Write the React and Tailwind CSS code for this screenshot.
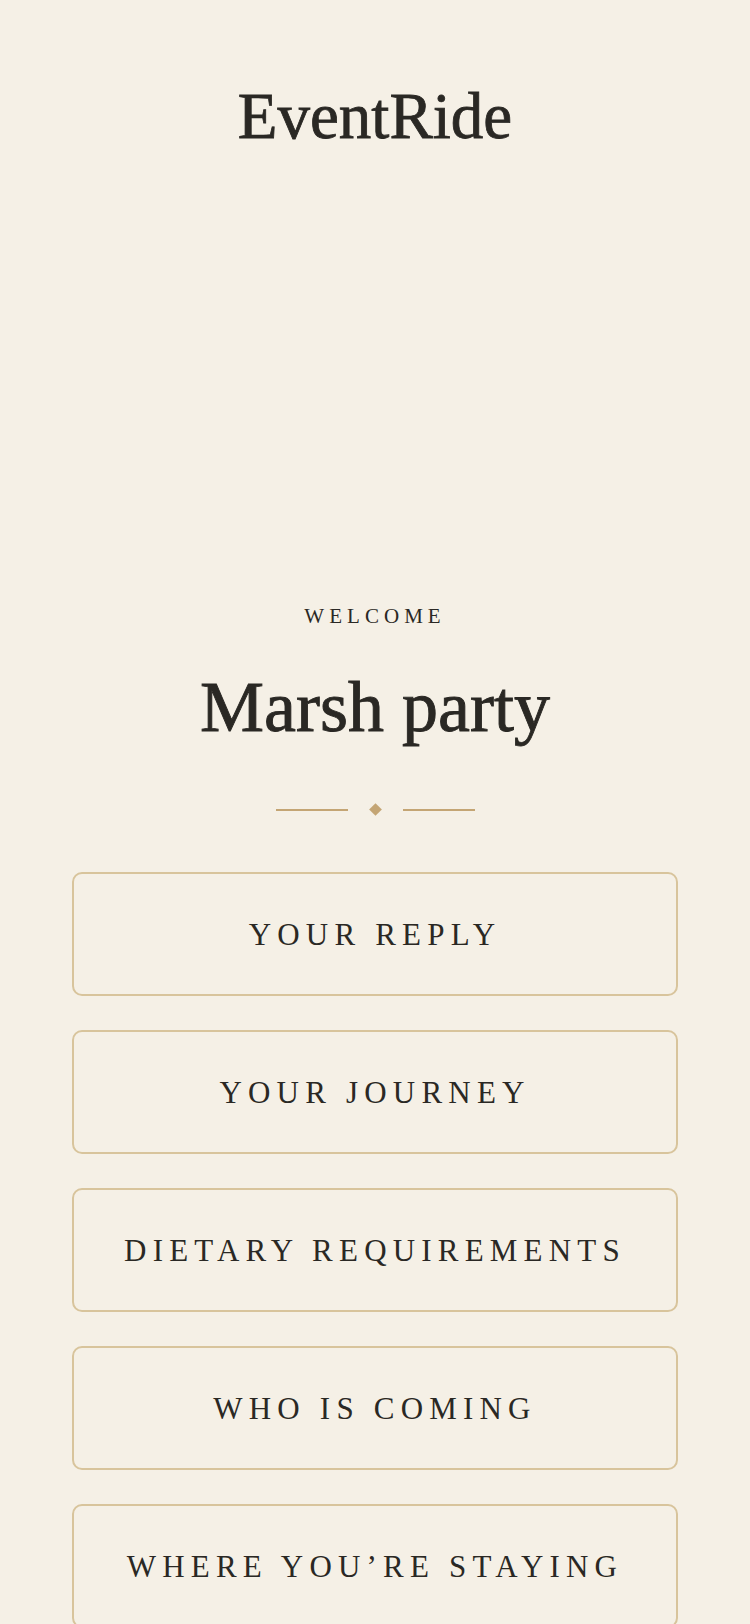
import React from "react";

const links = [
  "Your reply",
  "Your journey",
  "Dietary requirements",
  "Who is coming",
  "Where you’re staying",
];

function Divider() {
  return (
    <div className="flex items-center justify-center h-[13px]">
      <div className="w-[72px] h-[2px] bg-[#c4a574]" />
      <div className="mx-[23px] w-[9px] h-[9px] rotate-45 bg-[#c4a574]" />
      <div className="w-[72px] h-[2px] bg-[#c4a574]" />
    </div>
  );
}

export default function App() {
  return (
    <div className="min-h-screen bg-[#f5f0e6] text-[#2a2824] font-['Liberation_Serif',serif]">
      <header className="pt-[84px] text-center">
        <h1 className="text-[65px] leading-none [-webkit-text-stroke:0.8px_#2a2824]">
          EventRide
        </h1>
      </header>

      <main className="mt-[457px] px-[72px] pb-10">
        <p className="text-center text-[21px] leading-none uppercase tracking-[0.24em]">
          Welcome
        </p>
        <h2 className="mt-[44px] text-center text-[72px] leading-none [-webkit-text-stroke:0.9px_#2a2824]">
          Marsh party
        </h2>
        <div className="mt-[60px]">
          <Divider />
        </div>

        <nav className="mt-[56px] flex flex-col gap-[34px]">
          {links.map((label) => (
            <button
              key={label}
              className="h-[124px] w-full rounded-[10px] border-2 border-[#d8c49c] flex items-center justify-center text-[31px] leading-none uppercase tracking-[0.2em]"
            >
              {label}
            </button>
          ))}
        </nav>
      </main>
    </div>
  );
}
